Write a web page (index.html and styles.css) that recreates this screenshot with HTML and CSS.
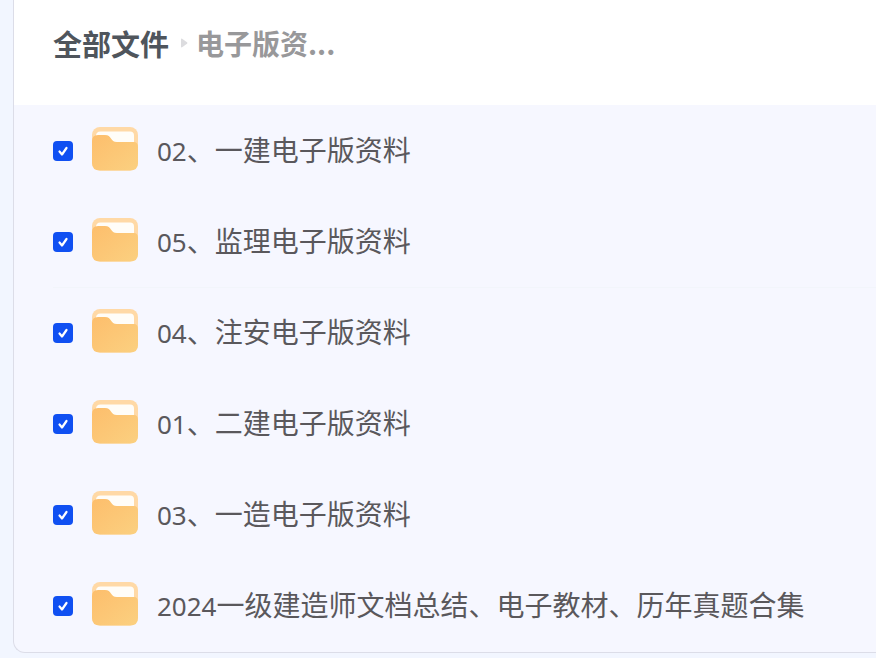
FILE: index.html
```html
<!DOCTYPE html>
<html lang="zh-CN">
<head>
    <meta charset="UTF-8">
    <meta name="viewport" content="width=device-width, initial-scale=1.0">
    <title>全部文件</title>
    <link rel="stylesheet" href="styles.css">
</head>
<body>
    <svg class="defs" width="0" height="0" aria-hidden="true">
        <defs>
            <linearGradient id="front" x1="0" y1="0" x2="1" y2="1">
                <stop offset="0" stop-color="#fdbe6c"/>
                <stop offset="1" stop-color="#fbd080"/>
            </linearGradient>
        </defs>
        <symbol id="folder" viewBox="0 0 46 44">
            <rect width="46" height="43.5" rx="8" fill="#ffd9a6"/>
            <path d="M4 12V9q0-4.500 4.500-4.500H38q4 0 4 4V20H4z" fill="#fffdf8"/>
            <path d="M0 14Q0 8 6 8H13C20 8 18 15 25 15H42Q46 15 46 20V36Q46 43.500 38 43.500H8Q0 43.500 0 36z" fill="url(#front)"/>
        </symbol>
    </svg>

    <main class="panel">
        <nav class="breadcrumb">
            <a class="root" href="#all">全部文件</a>
            <svg class="arrow" viewBox="0 0 8 10" aria-hidden="true"><path d="M1 1.500Q1 0 2.500 1L7 4.200Q8 5 7 5.800L2.500 9Q1 10 1 8.500z" fill="#dcdcdf"/></svg>
            <a class="current" href="#current">电子版资...</a>
        </nav>

        <ul class="files">
            <li class="file">
                <input type="checkbox" id="f1" checked>
                <svg class="folder" aria-hidden="true"><use href="#folder"/></svg>
                <label for="f1"><span class="num">02</span>、一建电子版资料</label>
            </li>
            <li class="file divided">
                <input type="checkbox" id="f2" checked>
                <svg class="folder" aria-hidden="true"><use href="#folder"/></svg>
                <label for="f2"><span class="num">05</span>、监理电子版资料</label>
            </li>
            <li class="file">
                <input type="checkbox" id="f3" checked>
                <svg class="folder" aria-hidden="true"><use href="#folder"/></svg>
                <label for="f3"><span class="num">04</span>、注安电子版资料</label>
            </li>
            <li class="file">
                <input type="checkbox" id="f4" checked>
                <svg class="folder" aria-hidden="true"><use href="#folder"/></svg>
                <label for="f4"><span class="num">01</span>、二建电子版资料</label>
            </li>
            <li class="file">
                <input type="checkbox" id="f5" checked>
                <svg class="folder" aria-hidden="true"><use href="#folder"/></svg>
                <label for="f5"><span class="num">03</span>、一造电子版资料</label>
            </li>
            <li class="file">
                <input type="checkbox" id="f6" checked>
                <svg class="folder" aria-hidden="true"><use href="#folder"/></svg>
                <label for="f6"><span class="num">2024</span>一级建造师文档总结、电子教材、历年真题合集</label>
            </li>
        </ul>
    </main>
</body>
</html>
```
FILE: styles.css
```css
* {
    box-sizing: border-box;
}
body {
    margin: 0;
    padding-left: 13px;
    background-color: #f2f6ff;
    color: #5a585c;
    font-family: "Noto Sans CJK SC", sans-serif;
}
.defs {
    display: block;
}
.panel {
    border: 1px solid #dcdde8;
    border-width: 0 0 1px 1px;
    border-bottom-left-radius: 12px;
    background-color: #f6f7ff;
    overflow: hidden;
}
.breadcrumb {
    display: flex;
    align-items: center;
    padding: 21px 39px 40px;
    background-color: #fff;
    font-weight: bold;
    line-height: 44px;
}
.breadcrumb a {
    text-decoration: none;
    white-space: nowrap;
}
.root {
    color: #4f555c;
    font-size: 29px;
}
.current {
    color: #98989a;
    font-size: 28px;
}
.arrow {
    width: 8px;
    height: 10px;
    margin: 0 8px 0 11px;
}
.files {
    margin: 0;
    padding: 1px 0 0 39px;
    list-style: none;
}
.file {
    display: flex;
    align-items: center;
    height: 91px;
    border-bottom: 1px solid transparent;
}
.divided {
    border-color: #f2f5fb;
}
.file input {
    appearance: none;
    flex: none;
    width: 20px;
    height: 20px;
    margin: 0;
    border-radius: 4px;
    background-color: #c9cede;
}
.file input:checked {
    background: #1050f2 url("data:image/svg+xml,%3Csvg xmlns='http://www.w3.org/2000/svg' viewBox='0 0 20 20'%3E%3Cpath d='M6.500 10.500L9 13.500L13.500 7' fill='none' stroke='white' stroke-width='2.200' stroke-linecap='round' stroke-linejoin='round'/%3E%3C/svg%3E") center / 20px no-repeat;
}
.folder {
    flex: none;
    width: 46px;
    height: 44px;
    margin: 0 19px 4px;
}
.file label {
    padding-bottom: 2px;
    font-size: 28px;
    line-height: 40px;
    white-space: nowrap;
}
.num {
    font-family: "Noto Sans", sans-serif;
    font-size: 26px;
}
```
